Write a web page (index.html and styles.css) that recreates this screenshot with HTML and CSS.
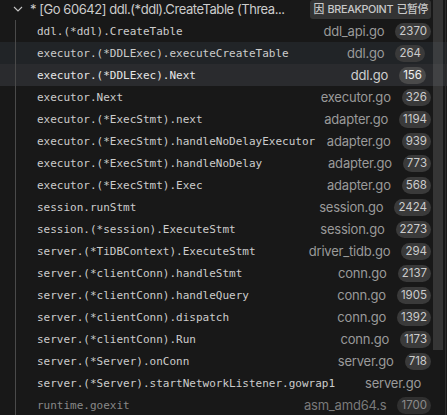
FILE: index.html
```html
<!DOCTYPE html>
<html>
<head>
<meta charset="utf-8">
<link rel="stylesheet" href="styles.css">
</head>
<body>
<div class="pane">
  <div class="thread">
    <svg class="chevron" width="10" height="10" viewBox="0 0 10 10"><path d="M1 3 L5 7 L9 3" fill="none" stroke="#c5c5c5" stroke-width="1.1"/></svg>
    <span class="thread-name">* [Go 60642] ddl.(*ddl).CreateTable (Threa...</span>
    <span class="state">因 BREAKPOINT 已暂停</span>
  </div>
  <div class="frames">
    <div class="frame"><span class="fn">ddl.(*ddl).CreateTable</span><span class="file">ddl_api.go</span><span class="line">2370</span></div>
    <div class="frame focused"><span class="fn">executor.(*DDLExec).executeCreateTable</span><span class="file">ddl.go</span><span class="line">264</span></div>
    <div class="frame selected"><span class="fn">executor.(*DDLExec).Next</span><span class="file">ddl.go</span><span class="line">156</span></div>
    <div class="frame"><span class="fn">executor.Next</span><span class="file">executor.go</span><span class="line">326</span></div>
    <div class="frame"><span class="fn">executor.(*ExecStmt).next</span><span class="file">adapter.go</span><span class="line">1194</span></div>
    <div class="frame"><span class="fn">executor.(*ExecStmt).handleNoDelayExecutor</span><span class="file">adapter.go</span><span class="line">939</span></div>
    <div class="frame"><span class="fn">executor.(*ExecStmt).handleNoDelay</span><span class="file">adapter.go</span><span class="line">773</span></div>
    <div class="frame"><span class="fn">executor.(*ExecStmt).Exec</span><span class="file">adapter.go</span><span class="line">568</span></div>
    <div class="frame"><span class="fn">session.runStmt</span><span class="file">session.go</span><span class="line">2424</span></div>
    <div class="frame"><span class="fn">session.(*session).ExecuteStmt</span><span class="file">session.go</span><span class="line">2273</span></div>
    <div class="frame"><span class="fn">server.(*TiDBContext).ExecuteStmt</span><span class="file">driver_tidb.go</span><span class="line">294</span></div>
    <div class="frame"><span class="fn">server.(*clientConn).handleStmt</span><span class="file">conn.go</span><span class="line">2137</span></div>
    <div class="frame"><span class="fn">server.(*clientConn).handleQuery</span><span class="file">conn.go</span><span class="line">1905</span></div>
    <div class="frame"><span class="fn">server.(*clientConn).dispatch</span><span class="file">conn.go</span><span class="line">1392</span></div>
    <div class="frame"><span class="fn">server.(*clientConn).Run</span><span class="file">conn.go</span><span class="line">1173</span></div>
    <div class="frame"><span class="fn">server.(*Server).onConn</span><span class="file">server.go</span><span class="line">718</span></div>
    <div class="frame no-line"><span class="fn">server.(*Server).startNetworkListener.gowrap1</span><span class="file">server.go</span></div>
    <div class="frame dim"><span class="fn">runtime.goexit</span><span class="file">asm_amd64.s</span><span class="line">1700</span></div>
  </div>
  <div class="scrollbar"></div>
  <div class="sash"></div>
</div>
</body>
</html>
```

FILE: styles.css
```css
html, body {
  margin: 0;
  padding: 0;
  background: #181818;
  overflow: hidden;
}
.pane {
  position: relative;
  width: 447px;
  height: 415px;
  overflow: hidden;
  font-family: "Inter", "Noto Sans CJK SC", sans-serif;
  color: #cccccc;
}
.thread {
  display: flex;
  align-items: center;
  height: 20px;
  padding-bottom: 2px;
  box-sizing: border-box;
  padding-right: 16px;
}
.chevron {
  margin-left: 13px;
  flex: none;
}
.thread-name {
  margin-left: 7px;
  font-size: 13px;
  letter-spacing: -0.45px;
  white-space: nowrap;
  flex: none;
  color: #cccccc;
}
.state {
  flex: none;
  height: 19px;
  line-height: 19px;
  padding: 0 3px 0 4px;
  margin-left: auto;
  background: #333333;
  border-radius: 3px;
  font-size: 10.8px;
  letter-spacing: -0.35px;
  word-spacing: 1px;
  color: #c8c8c8;
  font-weight: 500;
}
.frames {
  display: flex;
  flex-direction: column;
}
.frame {
  display: flex;
  align-items: center;
  height: 22px;
  padding-left: 37px;
  padding-right: 16px;
  background-color: #181818;
  background-image: linear-gradient(#4a4a4a, #4a4a4a);
  background-size: 1px 100%;
  background-position: 15px 0;
  background-repeat: no-repeat;
  white-space: nowrap;
}
.frame.focused {
  background-color: #212427;
  padding-right: 22px;
}
.frame.selected {
  background-color: #2a2b2e;
  padding-right: 21px;
}
.fn {
  font-family: "DejaVu Sans Mono", monospace;
  font-size: 11px;
  color: #cccccc;
  flex: none;
}
.file {
  flex: none;
  margin-left: auto;
  padding-left: 8px;
  font-size: 13px;
  letter-spacing: -0.2px;
  color: #9a9a9a;
}
.line {
  flex: none;
  margin-left: 11px;
  height: 17px;
  line-height: 17px;
  padding: 0 4px;
  min-width: 10px;
  text-align: center;
  border-radius: 9px;
  background: #3a3a3a;
  color: #cccccc;
  font-size: 11.5px;
}
.selected .fn { color: #e6e6e6; }
.selected .file { color: #cfcfcf; }
.selected .line { background: #4a4a4a; color: #f0f0f0; }
.no-line { padding-right: 26px; }
.dim .fn { color: #888888; }
.dim .file { color: #7a7a7a; }
.dim .line { color: #8a8a8a; background: #303030; }
.scrollbar {
  position: absolute;
  left: 433px;
  top: 0;
  width: 10px;
  height: 350px;
  background: rgba(110, 110, 110, 0.35);
}
.sash {
  position: absolute;
  left: 445px;
  top: 0;
  width: 1px;
  height: 415px;
  background: #2b2b2b;
}
```
